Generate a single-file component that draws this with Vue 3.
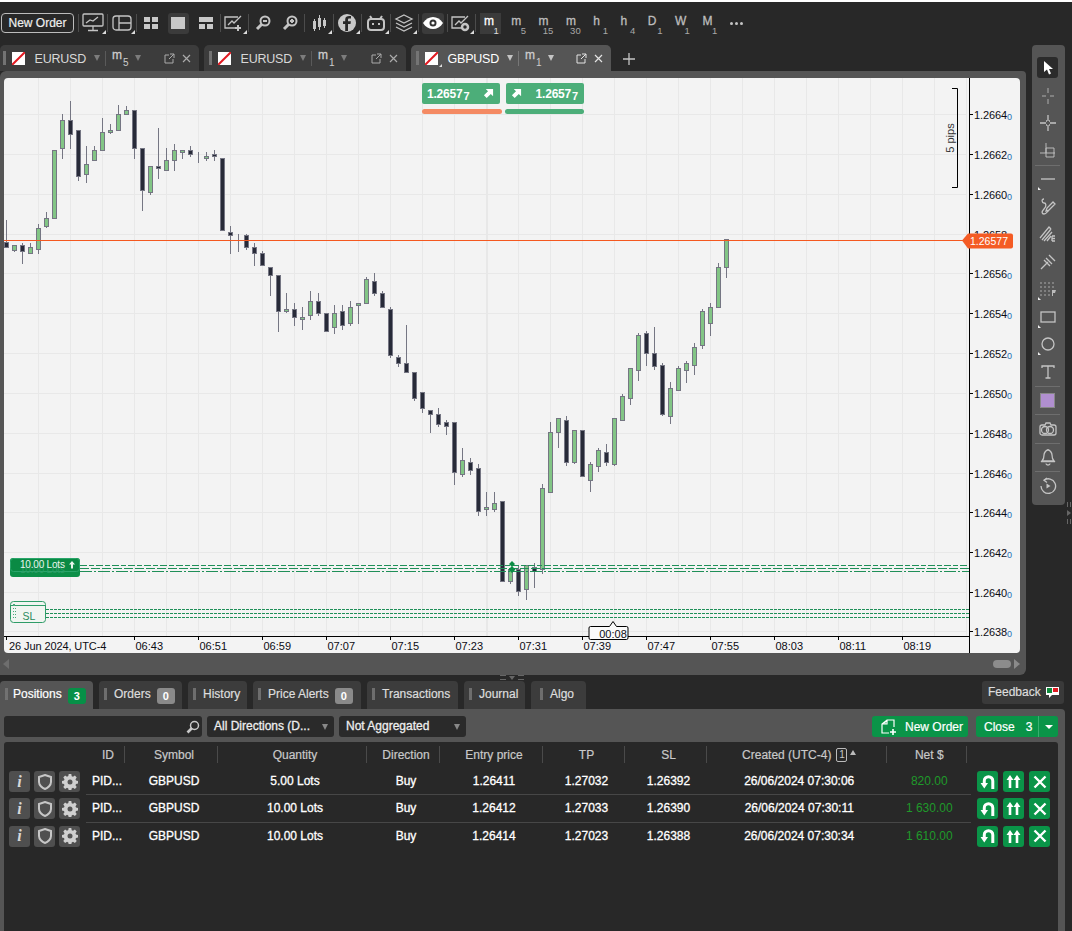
<template>
  <div class="app">
    <!-- top toolbar -->
    <div class="toolbar">
      <button class="new-order">New Order</button>
      <span class="sep"></span>
      <div class="tool wide menu">
        <svg width="24" height="22" viewBox="0 0 24 22" class="ic"><rect x="2" y="2" width="20" height="12" rx="1"/><path d="M5 11l4-3 3 1 5-4"/><path d="M12 14v4M7 18.5h10" /></svg>
      </div>
      <span class="sep"></span>
      <div class="tool wide menu">
        <svg width="22" height="20" viewBox="0 0 22 20" class="ic"><rect x="2" y="3" width="18" height="14" rx="3"/><path d="M8 3v14M8 10h12"/></svg>
      </div>
      <span class="sep"></span>
      <div class="tool">
        <svg width="14" height="12" viewBox="0 0 14 12" class="solid"><rect width="6" height="5"/><rect x="8" width="6" height="5"/><rect y="7" width="6" height="5"/><rect x="8" y="7" width="6" height="5"/></svg>
      </div>
      <div class="tool selected">
        <svg width="14" height="12" viewBox="0 0 14 12" class="solid"><rect width="14" height="12"/></svg>
      </div>
      <div class="tool">
        <svg width="14" height="12" viewBox="0 0 14 12" class="solid"><rect width="14" height="5"/><rect y="7" width="6" height="5"/><rect x="8" y="7" width="6" height="5"/></svg>
      </div>
      <span class="sep"></span>
      <div class="tool menu">
        <svg width="22" height="20" viewBox="0 0 22 20" class="ic"><path d="M13 15H2V4h13"/><path d="M5 12l4-4 2 2 7-7"/><path d="M15 12v6M12 15h6" stroke-width="2"/></svg>
      </div>
      <span class="sep"></span>
      <div class="tool tool-s">
        <svg width="16" height="16" viewBox="0 0 16 16" class="ic thick"><circle cx="10" cy="6" r="4.5"/><path d="M7 9l-5 5" stroke-width="3"/><path d="M8 6h4"/></svg>
      </div>
      <div class="tool tool-s">
        <svg width="16" height="16" viewBox="0 0 16 16" class="ic thick"><circle cx="10" cy="6" r="4.5"/><path d="M7 9l-5 5" stroke-width="3"/><path d="M8 6h4M10 4v4"/></svg>
      </div>
      <span class="sep"></span>
      <div class="tool menu">
        <svg width="16" height="20" viewBox="0 0 16 20" class="solid"><path d="M2 8h1v-2h1v2h1v8h-1v2h-1v-2h-1zM7 5h1v-3h1v3h1v9h-1v3h-1v-3h-1zM12 7h1v-2h1v2h1v6h-1v2h-1v-2h-1z"/></svg>
      </div>
      <span class="sep"></span>
      <div class="tool menu">
        <svg width="20" height="20" viewBox="0 0 20 20"><circle cx="10" cy="10" r="9" fill="#c8c8c8"/><path d="M11 18v-7h2.5l.4-2.800H11V6.800c0-.8.3-1.300 1.400-1.300H14V3.100c-2.800-.4-5.800-.1-5.800 3.300v1.800H6V11h2.200v7z" fill="#282828"/></svg>
      </div>
      <span class="sep"></span>
      <div class="tool menu">
        <svg width="20" height="20" viewBox="0 0 20 20" class="ic thick"><path d="M4 3l2 3M16 3l-2 3"/><rect x="2" y="6" width="16" height="11" rx="3"/><path d="M6 11h2M12 11h2" stroke-width="2"/></svg>
      </div>
      <span class="sep"></span>
      <div class="tool menu">
        <svg width="20" height="20" viewBox="0 0 20 20" class="ic"><path d="M10 2l8 4-8 4-8-4zM2 10l8 4 8-4M2 14l8 4 8-4"/></svg>
      </div>
      <span class="sep"></span>
      <div class="tool selected">
        <svg width="20" height="12" viewBox="0 0 20 12"><path d="M0 6c5-8 15-8 20 0-5 8-15 8-20 0z" fill="#fff"/><circle cx="10" cy="6" r="3.5" fill="#333"/><circle cx="10" cy="6" r="1.600" fill="#fff"/></svg>
      </div>
      <span class="sep"></span>
      <div class="tool menu">
        <svg width="22" height="20" viewBox="0 0 22 20" class="ic"><path d="M11 15H2V4h13"/><path d="M5 12l4-4 2 2 7-7"/><circle cx="15" cy="14" r="3" stroke-width="2.5"/></svg>
      </div>
      <span class="sep"></span>
      <div class="timeframes">
        <div v-for="(tf, i) in timeframes" :key="i" class="tf" :class="{ active: i === 0 }">{{ tf[0] }}<sub>{{ tf[1] }}</sub></div>
        <div class="more"><i></i><i></i><i></i></div>
      </div>
    </div>

    <div class="workspace">
      <div class="main-col">
        <!-- chart tabs -->
        <div class="tabs">
          <div v-for="t in tabs" :key="t.id" class="tab" :class="[t.id, { active: t.active }]">
            <span class="grip"></span>
            <span class="flag" :class="{ menu: t.active }"><svg width="13" height="13" viewBox="0 0 13 13"><rect width="13" height="13" fill="#fff"/><path d="M0 13L13 0" stroke="#e11a22" stroke-width="2"/></svg></span>
            <span class="sym">{{ t.symbol }}</span>
            <span class="caret"></span>
            <span class="tab-sep"></span>
            <span class="tab-tf">m<sub>{{ t.tf }}</sub></span>
            <span class="caret"></span>
            <svg class="pop" width="11" height="11" viewBox="0 0 11 11"><path d="M5 2H1v8h8V6M6 1h4v4M10 1L5 6" fill="none" stroke="currentColor"/></svg>
            <svg class="close" width="9" height="9" viewBox="0 0 9 9"><path d="M1 1l7 7M8 1l-7 7" stroke="currentColor" stroke-width="1.200"/></svg>
          </div>
          <svg class="plus" width="14" height="14" viewBox="0 0 14 14"><path d="M7 1v12M1 7h12" stroke="#c4c4c4" stroke-width="1.300"/></svg>
        </div>

        <div class="chart-panel">
          <div class="chart">
            <svg class="plot" width="1016" height="575" viewBox="4 78 1016 575">
              <g class="grid">
                <line v-for="x in gridX" :key="x" :x1="x" :x2="x" y1="78" y2="636" />
                <line v-for="y in gridY" :key="y" x1="4" x2="967" :y1="y" :y2="y" />
                <line x1="487.5" x2="487.5" y1="78" y2="636" />
              </g>
              <g v-for="c in candles" :key="c.x">
                <line class="wick" :x1="c.x" :x2="c.x" :y1="c.wt" :y2="c.wb" />
                <rect class="body" :class="c.up ? 'up' : 'down'" :x="c.x - 2" :y="c.bt + 0.5" width="4" :height="Math.max(c.bb - c.bt, 0)" />
              </g>

              <line class="price-line" x1="4" x2="965" y1="240.5" y2="240.5" />

              <!-- position lines -->
              <g class="pos-lines">
                <line x1="80" x2="970" y1="565.5" y2="565.5" stroke-dasharray="7 2 5 2" />
                <line x1="80" x2="970" y1="568.5" y2="568.5" stroke-dasharray="9 2" />
                <line x1="80" x2="970" y1="571.5" y2="571.5" stroke-dasharray="12 2 2 2" />
                <line x1="46" x2="970" y1="609.5" y2="609.5" stroke-dasharray="3 1" />
                <line x1="46" x2="970" y1="613.5" y2="613.5" stroke-dasharray="3 1" />
                <line x1="46" x2="970" y1="617.5" y2="617.5" stroke-dasharray="3 1" />
              </g>
              <path class="marker" d="M512 561l3 3-3 3-3-3zM512 566l3.5 3.5-3.5 3.5-3.5-3.5z" />

              <g class="axis">
                <line x1="969.5" x2="969.5" y1="78" y2="653" />
                <line x1="4" x2="970" y1="636.5" y2="636.5" />
                <line v-for="y in prices" :key="y.y" x1="970" x2="973" :y1="y.y" :y2="y.y" />
                <line v-for="t in times" :key="t.x" :x1="t.x" :x2="t.x" y1="636" y2="640" />
                <line x1="6.5" x2="6.5" y1="636" y2="640" />
              </g>
              <text v-for="y in prices" :key="'p' + y.y" class="label price" x="974" :y="y.y + 4">{{ y.text }}<tspan class="tail" dy="1.5">0</tspan></text>
              <text class="label date" x="9" y="650">26 Jun 2024, UTC-4</text>
              <text v-for="t in times" :key="'t' + t.x" class="label" :x="t.x + 1" y="650">{{ t.text }}</text>

              <!-- 5 pips ruler -->
              <path class="ruler" d="M952 88.5h5.5v99H952" />
              <text class="pips" transform="translate(954 138) rotate(-90)" text-anchor="middle">5 pips</text>

              <!-- current price tag -->
              <path class="tag" d="M962 240.5l6-7h43a2 2 0 0 1 2 2v11a2 2 0 0 1-2 2h-43z" />
              <text class="tag-text" x="989" y="244.5" text-anchor="middle">1.26577</text>

              <!-- lots tag -->
              <rect class="lots" x="10" y="558" width="70" height="19" rx="3" />
              <rect class="lots-top" x="10.5" y="558.5" width="69" height="13" rx="3" />
              <text class="lots-shadow" x="20" y="573">10.00 Lots</text>
              <text class="lots-text" x="20" y="568">10.00 Lots</text>
              <path class="lots-arrow" d="M72 561l3 3.5h-2v4h-2v-4h-2z" />

              <!-- SL tag -->
              <rect class="sl" x="10.5" y="601.5" width="35" height="21" rx="3" />
              <line class="sl-line" x1="11" x2="45" y1="605.5" y2="605.5" />
              <path class="sl-grip" d="M13 604h2v2h-2zM13 608h1v1h-1zM15 608h1v1h-1zM13 611h1v1h-1zM15 611h1v1h-1zM13 614h1v1h-1zM15 614h1v1h-1zM13 617h1v1h-1zM15 617h1v1h-1z" />
              <text class="sl-text" x="29" y="620" text-anchor="middle">SL</text>

              <!-- candle timer -->
              <path class="timer" d="M590.5 626.5h19l3.5-5 3.5 5h10a1.5 1.5 0 0 1 1.5 1.5v10a1.5 1.5 0 0 1-1.5 1.5h-36a1.5 1.5 0 0 1-1.5-1.5v-10a1.5 1.5 0 0 1 1.5-1.5z" />
              <text class="label" x="613" y="637.5" text-anchor="middle">00:08</text>
            </svg>

            <!-- quick trade -->
            <div class="quick">
              <div class="quick-col">
                <div class="quick-btn">
                  <span>1.2657<small>7</small></span>
                  <svg width="11" height="11" viewBox="0 0 12 12"><path d="M3 1h8v8L8.5 6.5 4 11 1 8l4.5-4.5z" fill="#fff"/></svg>
                </div>
                <div class="quick-bar sell"></div>
              </div>
              <div class="quick-col">
                <div class="quick-btn">
                  <svg width="11" height="11" viewBox="0 0 12 12"><path d="M3 1h8v8L8.5 6.5 4 11 1 8l4.5-4.5z" fill="#fff"/></svg>
                  <span>1.2657<small>7</small></span>
                </div>
                <div class="quick-bar buy"></div>
              </div>
            </div>
          </div>
          <div class="scroll">
            <span class="arrow-l"></span>
            <span class="thumb"></span>
            <span class="arrow-r"></span>
          </div>
        </div>
      </div>

      <!-- drawing tools -->
      <div class="side-wrap">
        <div class="side">
          <div class="side-grip"></div>
          <div class="side-item current">
            <svg width="14" height="16" viewBox="0 0 14 16"><path d="M3 1v11l3-2.5 2 5 2-1-2-4.5h4z" fill="#fff"/></svg>
          </div>
          <div class="side-item"><svg width="18" height="18" viewBox="0 0 18 18" class="ic"><path d="M9 1v5M9 12v5M3 9h4M11 9h4" stroke-width=".8"/></svg></div>
          <div class="side-item"><svg width="18" height="18" viewBox="0 0 18 18" class="ic"><path d="M9 1v6M9 11v6M1 9h6M11 9h6M7 7h1M10 7h1M7 11h1M10 11h1"/></svg></div>
          <div class="side-item"><svg width="18" height="18" viewBox="0 0 18 18" class="ic"><path d="M7 1v10H1M7 11h9M7 6h8v9H7z" stroke-width=".9"/></svg></div>
          <div class="side-sep first"></div>
          <div class="side-item menu"><svg width="18" height="6" viewBox="0 0 18 6" class="ic"><path d="M2 3h14"/></svg></div>
          <div class="side-item"><svg width="18" height="18" viewBox="0 0 18 18" class="ic"><path d="M5 1c-3 0-2 4 0 4s3 3 0 6-2 5 0 5 3-2 5-4l6-6-2-2-6 6-1 3 3-1"/></svg></div>
          <div class="side-item"><svg width="18" height="18" viewBox="0 0 18 18" class="ic"><path d="M1 13L10 2l2 2M3 15l9-11M5 16l8-9M8 16l4-5"/><path d="M13 11h3M13 13.5h3M13 16h3M13 11v5"/></svg></div>
          <div class="side-item"><svg width="18" height="18" viewBox="0 0 18 18" class="ic"><path d="M2 16l7-7M7 5l6 6M10 2l6 6M5 7l6 6"/></svg></div>
          <div class="side-item menu"><svg width="18" height="14" viewBox="0 0 18 14" class="dots"><path d="M1 1h16M1 5h16M1 9h10M1 13h10"/><path d="M13 8h4l-1 3h-2v3h-1z" class="dots-fill"/></svg></div>
          <div class="side-item menu"><svg width="16" height="12" viewBox="0 0 16 12" class="ic"><rect x="1" y="1" width="14" height="10"/></svg></div>
          <div class="side-item menu"><svg width="14" height="14" viewBox="0 0 14 14" class="ic"><circle cx="7" cy="7" r="6"/></svg></div>
          <div class="side-item"><svg width="14" height="14" viewBox="0 0 14 14" class="ic"><path d="M1 3V1h12v2M7 1v12M4.5 13h5"/></svg></div>
          <div class="side-sep"></div>
          <div class="side-item"><span class="swatch"></span></div>
          <div class="side-sep"></div>
          <div class="side-item"><svg width="18" height="14" viewBox="0 0 18 14" class="ic"><path d="M6 3l1-2h4l1 2h3a2 2 0 0 1 2 2v6a2 2 0 0 1-2 2H3a2 2 0 0 1-2-2V5a2 2 0 0 1 2-2z"/><circle cx="11" cy="8" r="3.5"/><circle cx="6" cy="8" r="3.5"/></svg></div>
          <div class="side-sep"></div>
          <div class="side-item"><svg width="16" height="18" viewBox="0 0 16 18" class="ic"><path d="M8 1v1M2 13c2-2 2-4 2-6s2-5 4-5 4 3 4 5 0 4 2 6zM1 13.5h14M6 15.5c0 2 4 2 4 0"/></svg></div>
          <div class="side-sep"></div>
          <div class="side-item"><svg width="18" height="18" viewBox="0 0 18 18" class="ic"><path d="M5 3.200A7.300 7.300 0 1 1 2 9"/><path d="M8 1L5 3.200 8 5.500"/><path d="M7.500 6.500v5l4-2.500z" class="fill-ic"/></svg></div>
        </div>
        <div class="side-handle"><i></i><b></b><i></i></div>
      </div>
    </div>

    <!-- bottom panel -->
    <div class="bottom">
      <div class="resize"><i></i><b></b><i></i></div>
      <div class="btabs">
        <div v-for="b in bottomTabs" :key="b.name" class="btab" :class="{ active: b.active }" :style="{ width: b.w + 'px' }">
          <span class="grip small"></span>
          <span class="btab-name">{{ b.name }}</span>
          <span v-if="b.count !== undefined" class="count" :class="{ on: b.active }">{{ b.count }}</span>
        </div>
        <div class="feedback">
          Feedback
          <svg width="15" height="13" viewBox="0 0 15 13"><path d="M1 1h13v8H7l-3 3V9H1z" fill="#fff"/><rect x="2" y="2" width="5" height="5" fill="#108a3c"/><rect x="8" y="2" width="5" height="4" fill="#e01b22"/></svg>
        </div>
      </div>
      <div class="bpanel">
        <div class="filters">
          <div class="search">
            <svg width="14" height="14" viewBox="0 0 14 14" class="search-ic"><circle cx="8.5" cy="5.5" r="4"/><path d="M6 8l-4.500 4.500" stroke-width="2.6"/></svg>
          </div>
          <div class="select s1">All Directions (D...<span class="s-caret"></span></div>
          <div class="select s2">Not Aggregated<span class="s-caret"></span></div>
          <button class="g-btn order">
            <svg width="17" height="18" viewBox="0 0 17 18" class="btn-ic"><path d="M9 15H2V6l5-4h7v7M5 6V4M7 2v4H2"/><path d="M13 11v6M10 14h6" stroke-width="1.6"/></svg>
            New Order
          </button>
          <div class="g-btn closer">
            <span class="close-label">Close</span><span class="close-n">3</span>
            <span class="close-drop"><i></i></span>
          </div>
        </div>

        <div class="table">
          <div class="thead">
            <div class="thead-gap"></div>
            <div class="cols">
              <div v-for="h in headers" :key="h" class="th">
                <span>{{ h }}</span>
                <template v-if="h === 'Created (UTC-4)'">
                  <span class="sort-n">1</span><span class="sort-up"></span>
                </template>
              </div>
            </div>
          </div>

          <div v-for="(r, i) in rows" :key="i" class="row">
            <div class="acts">
              <span class="act"><em>i</em></span>
              <span class="act"><svg width="14" height="16" viewBox="0 0 14 16"><path d="M7 1l6 2v5c0 3-3 6-6 7-3-1-6-4-6-7V3z" fill="none" stroke="#c6c6c6" stroke-width="2"/></svg></span>
              <span class="act"><svg width="16" height="16" viewBox="0 0 16 16"><path d="M6.7 0h2.600l.4 2.200 1.300.6 1.900-1.200 1.800 1.900-1.200 1.800.5 1.300 2 .4v2.600l-2 .4-.5 1.300 1.200 1.800-1.800 1.900-1.900-1.200-1.300.6-.4 2.200H6.700l-.4-2.200-1.300-.6-1.900 1.200-1.800-1.900 1.200-1.800-.5-1.300-2-.4V6.900l2-.4.5-1.300-1.200-1.800 1.800-1.900 1.900 1.200 1.300-.6z" fill="#d0d0d0"/><circle cx="8" cy="8" r="2.5" fill="#555"/></svg></span>
            </div>
            <div class="cols body-cols" :class="{ last: i === rows.length - 1 }">
              <div class="td pid">PID...</div>
              <div class="td">GBPUSD</div>
              <div class="td">{{ r.qty }}</div>
              <div class="td">Buy</div>
              <div class="td">{{ r.entry }}</div>
              <div class="td">{{ r.tp }}</div>
              <div class="td">{{ r.sl }}</div>
              <div class="td">{{ r.created }}</div>
              <div class="td net">{{ r.net }}</div>
            </div>
            <div class="row-btns">
              <span class="gbtn"><svg width="16" height="16" viewBox="0 0 15 15"><path d="M12 14V6.500a4 4 0 0 0-8 0V9" fill="none" stroke="#fff" stroke-width="2.8"/><path d="M.5 8.500h7L4 13.500z" fill="#fff"/></svg></span>
              <span class="gbtn"><svg width="15" height="15" viewBox="0 0 15 15"><path d="M4 1l3.500 5H5.300v8H2.700V6H.5zM11 1l3.500 5h-2.200v8H9.700V6H7.500z" fill="#fff"/></svg></span>
              <span class="gbtn"><svg width="14" height="14" viewBox="0 0 14 14"><path d="M1.500 1.500l11 11M12.500 1.500l-11 11" stroke="#fff" stroke-width="2.400"/></svg></span>
            </div>
          </div>
        </div>
      </div>
    </div>
  </div>
</template>

<script setup>
const timeframes = [
  ["m", 1], ["m", 5], ["m", 15], ["m", 30], ["h", 1], ["h", 4], ["D", 1], ["W", 1], ["M", 1],
]

const tabs = [
  { id: "t1", symbol: "EURUSD", tf: 5 },
  { id: "t2", symbol: "EURUSD", tf: 1 },
  { id: "t3", symbol: "GBPUSD", tf: 1, active: true },
]

const bottomTabs = [
  { name: "Positions", w: 93, count: 3, active: true },
  { name: "Orders", w: 83, count: 0 },
  { name: "History", w: 59 },
  { name: "Price Alerts", w: 108, count: 0 },
  { name: "Transactions", w: 91 },
  { name: "Journal", w: 61 },
  { name: "Algo", w: 55 },
]

const headers = ["ID", "Symbol", "Quantity", "Direction", "Entry price", "TP", "SL", "Created (UTC-4)", "Net $"]

const rows = [
  { qty: "5.00 Lots", entry: "1.26411", tp: "1.27032", sl: "1.26392", created: "26/06/2024 07:30:06", net: "820.00" },
  { qty: "10.00 Lots", entry: "1.26412", tp: "1.27033", sl: "1.26390", created: "26/06/2024 07:30:11", net: "1 630.00" },
  { qty: "10.00 Lots", entry: "1.26414", tp: "1.27023", sl: "1.26388", created: "26/06/2024 07:30:34", net: "1 610.00" },
]

// grid and axis in page pixels, the svg viewBox starts at the chart's corner
const gridX = Array.from({ length: 30 }, (_, i) => 38.5 + 32 * i)
const gridY = [114.5, 154.5, 194.5, 234.5, 273.5, 313.5, 353.5, 393.5, 433.5, 473.5, 512.5, 552.5, 592.5, 631.5]

const priceText = ["1.2664", "1.2662", "1.2660", "1.2658", "1.2656", "1.2654", "1.2652", "1.2650", "1.2648", "1.2646", "1.2644", "1.2642", "1.2640", "1.2638"]
const prices = priceText.map((text, i) => ({ text, y: gridY[i] }))

const timeText = ["06:43", "06:51", "06:59", "07:07", "07:15", "07:23", "07:31", "07:39", "07:47", "07:55", "08:03", "08:11", "08:19"]
const times = timeText.map((text, i) => ({ text, x: 134.5 + 64 * i }))

// wick top, body top, body bottom, wick bottom, 1 = green
const raw = [
  [220, 242, 247, 247, 0], [245, 245, 250, 252, 1], [243, 245, 251, 264, 0], [243, 247, 253, 253, 1],
  [224, 228, 249, 254, 1], [212, 218, 226, 228, 1], [150, 150, 218, 218, 1], [114, 120, 148, 159, 1],
  [101, 120, 134, 149, 0], [130, 130, 176, 181, 0], [146, 164, 174, 183, 1], [146, 150, 160, 160, 1],
  [118, 132, 150, 150, 1], [124, 130, 132, 134, 1], [105, 114, 130, 130, 1], [106, 110, 114, 114, 1],
  [110, 110, 148, 159, 0], [148, 148, 190, 211, 0], [166, 166, 192, 195, 1], [128, 166, 168, 179, 0],
  [148, 160, 170, 170, 1], [144, 150, 160, 171, 1], [150, 150, 152, 159, 1], [146, 150, 154, 157, 0],
  [152, 158, 158, 163, 1], [152, 156, 158, 161, 1], [150, 154, 156, 161, 0], [158, 158, 230, 230, 0],
  [226, 232, 235, 254, 0], [234, 237, 237, 252, 1], [234, 235, 247, 250, 0], [243, 247, 253, 266, 0],
  [251, 253, 265, 265, 0], [267, 267, 275, 296, 0], [275, 275, 311, 332, 0], [293, 309, 311, 313, 1],
  [303, 309, 317, 326, 0], [307, 317, 319, 330, 1], [291, 301, 315, 320, 1], [293, 301, 313, 316, 0],
  [313, 313, 331, 331, 0], [305, 313, 327, 334, 1], [305, 311, 325, 330, 0], [301, 307, 323, 326, 1],
  [303, 303, 305, 324, 1], [277, 279, 303, 303, 1], [273, 281, 293, 296, 0], [291, 293, 307, 307, 0],
  [307, 309, 355, 358, 0], [355, 357, 363, 367, 0], [325, 363, 372, 372, 0], [372, 372, 398, 401, 0],
  [392, 392, 408, 413, 0], [410, 410, 414, 433, 0], [408, 414, 424, 427, 0], [420, 422, 426, 435, 0],
  [422, 422, 472, 485, 0], [448, 460, 474, 477, 1], [458, 462, 470, 475, 0], [464, 468, 511, 516, 0],
  [492, 507, 509, 516, 1], [492, 503, 509, 512, 1], [501, 501, 581, 581, 0], [569, 569, 581, 584, 1],
  [565, 569, 591, 596, 0], [565, 565, 589, 600, 1], [563, 567, 571, 588, 0], [484, 488, 569, 574, 1],
  [422, 432, 492, 492, 1], [418, 418, 432, 448, 1], [416, 420, 462, 466, 0], [430, 430, 462, 464, 1],
  [430, 430, 476, 476, 0], [462, 464, 480, 492, 1], [448, 450, 466, 472, 1], [444, 452, 462, 466, 0],
  [418, 418, 464, 466, 1], [394, 396, 420, 420, 1], [368, 368, 398, 405, 1], [333, 335, 370, 381, 1],
  [331, 333, 353, 366, 0], [327, 353, 366, 370, 0], [363, 365, 414, 416, 0], [382, 388, 416, 424, 1],
  [366, 368, 390, 390, 1], [361, 363, 370, 383, 1], [343, 347, 365, 375, 1], [309, 311, 345, 349, 1],
  [303, 307, 323, 336, 1], [263, 267, 307, 307, 1], [239, 239, 267, 278, 1],
]
const candles = raw.map((c, i) => ({
  x: 6.5 + 8 * i, wt: c[0], bt: c[1], bb: c[2], wb: c[3], up: c[4] === 1,
}))
</script>

<style scoped>
.app {
  width: 1072px;
  height: 931px;
  box-sizing: border-box;
  border-top: 2px solid #fff;
  background: #282828;
  overflow: hidden;
  display: flex;
  flex-direction: column;
  font-family: "Liberation Sans", Arial, sans-serif;
  font-size: 12px;
  color: #eee;
}

.ic { fill: none; stroke: #c4c4c4; stroke-width: 1.3; }
.ic.thick { stroke-width: 2; }
.solid { fill: #c8c8c8; }
.fill-ic { fill: #c4c4c4; stroke: none; }

/* toolbar */
.toolbar {
  height: 42px;
  display: flex;
  align-items: center;
  padding-left: 1px;
  background: #282828;
}
.new-order {
  width: 73px;
  height: 20px;
  margin-right: 4px;
  padding: 0;
  box-sizing: border-box;
  border: 1px solid #bcbcbc;
  border-radius: 4px;
  background: #282828;
  color: #eee;
  font: 12px "Liberation Sans", Arial, sans-serif;
  -webkit-text-stroke: .2px;
}
.sep {
  width: 1px;
  height: 18px;
  background: #4c4c4c;
}
.tool {
  position: relative;
  width: 27.5px;
  height: 21px;
  display: flex;
  align-items: center;
  justify-content: center;
}
.tool.wide { width: 28px; }
.tool.selected::before {
  content: "";
  position: absolute;
  inset: 0 3px;
  border-radius: 3px;
  background: #3b3b3b;
}
.tool > svg { position: relative; }
.menu::after {
  content: "";
  position: absolute;
  right: 1px;
  bottom: 0;
  border-style: solid;
  border-width: 0 0 4px 4px;
  border-color: transparent transparent #ddd transparent;
}
.timeframes {
  display: flex;
  align-items: center;
  margin-left: 1px;
}
.tf {
  position: relative;
  width: 27.3px;
  height: 21px;
  box-sizing: border-box;
  padding: 0 0 0 7px;
  font-size: 12px;
  line-height: 17px;
  -webkit-text-stroke: .3px;
  color: #bdbdbd;
  border-radius: 3px;
}
.tf.active {
  color: #fff;
  background: linear-gradient(#3b3b3b, #3b3b3b) 3px 0 / 21px 21px no-repeat;
}
.tf sub {
  position: absolute;
  right: 5.5px;
  top: 13px;
  font-size: 9.5px;
  line-height: 9px;
  -webkit-text-stroke: 0;
  color: #a8a8a8;
}
.tf.active sub { color: #ddd; }
.more {
  display: flex;
  gap: 2px;
  margin-left: 7px;
}
.more i {
  width: 3px;
  height: 3px;
  border-radius: 50%;
  background: #c4c4c4;
}

/* workspace */
.workspace { display: flex; height: 631px; flex: none; }
.main-col { width: 1026px; flex: none; }
.tabs {
  height: 27px;
  display: flex;
  align-items: flex-end;
  gap: 5px;
}
.tab {
  position: relative;
  height: 26px;
  box-sizing: border-box;
  display: flex;
  align-items: center;
  background: #3c3c3c;
  border-radius: 5px 5px 0 0;
  color: #aaa;
  padding-left: 5px;
}
.t1 { width: 199px; padding-left: 3px; }
.t2 { width: 202px; }
.t3 { width: 200px; }
.tab.active { background: #555; color: #e4e4e4; }
.grip {
  width: 3px;
  height: 14px;
  margin-right: 6px;
  flex: none;
  background: radial-gradient(circle, #777 .7px, transparent .8px) 0 0 / 2px 2px;
}
.grip.small { margin-right: 0; height: 12px; opacity: .9; }
.flag { position: relative; width: 13px; height: 13px; margin-right: 9.5px; }
.flag svg { display: block; }
.flag.menu::after { right: -4px; bottom: -2px; border-width: 0 0 3px 3px; }
.sym { width: 50.5px; padding-top: 2px; font-size: 12.5px; letter-spacing: -.2px; color: #d8d8d8; }
.tab.active .sym { color: #fff; }
.caret {
  width: 0;
  height: 0;
  margin-left: 9px;
  border-style: solid;
  border-width: 6px 3.5px 0;
  border-color: #7c7c7c transparent transparent;
}
.tab.active .caret { border-top-color: #c4c4c4; }
.tab-sep {
  width: 1px;
  height: 15px;
  margin: 0 6px 0 5px;
  background: #5a5a5a;
}
.tab.active .tab-sep { background: #777; }
.tab-tf {
  width: 14px;
  margin-top: -5px;
  color: #ccc;
  -webkit-text-stroke: .3px;
}
.tab-tf sub {
  font-size: 10px;
  vertical-align: -7px;
  line-height: 0;
  margin-left: 1px;
  -webkit-text-stroke: 0;
}
.pop { position: absolute; right: 24px; top: 8px; }
.close { position: absolute; right: 8px; top: 9px; }
.plus { margin: 0 0 5px 6px; }

.chart-panel {
  height: 604px;
  box-sizing: border-box;
  padding: 7px 6px 0 4px;
  background: #555;
  border-radius: 6px 4px 6px 0;
}
.chart {
  position: relative;
  width: 1016px;
  height: 575px;
  background: #f3f3f3;
  border-radius: 4px;
  overflow: hidden;
}
.plot { display: block; }
.grid line { stroke: #e8e8e8; stroke-width: 1; }
.wick { stroke: #757683; stroke-width: 1; }
.body { stroke: #757683; stroke-width: 1; }
.body.up { fill: #82c585; }
.body.down { fill: #272a38; }
.price-line { stroke: #f4581f; stroke-width: 1; }
.pos-lines line { stroke: #1f8f58; stroke-width: 1; }
.marker { fill: #0b8c45; }
.axis line { stroke: #000; stroke-width: 1; }
.label { font-size: 11px; fill: #0c0c14; }
.label.price { letter-spacing: -.1px; }
.label.date { letter-spacing: -.1px; }
.tail { font-size: 9px; fill: #1f6fb5; }
.ruler { fill: none; stroke: #000; stroke-width: 1; }
.pips { font-size: 11px; fill: #333; }
.tag { fill: #f45b24; }
.tag-text { font-size: 10.5px; fill: #fff; }
.lots { fill: #0c8f48; }
.lots-top { fill: #0a8a44; stroke: #2aa56a; stroke-width: 1; }
.lots-text { font-size: 10px; letter-spacing: -.2px; fill: #e8f5ec; }
.lots-shadow { font-size: 10px; letter-spacing: -.2px; fill: #2b9c64; }
.lots-arrow { fill: #e8f5ec; }
.sl { fill: #f1f5f1; stroke: #2f9c68; stroke-width: 1; }
.sl-line { stroke: #2f9c68; stroke-width: 1; }
.sl-grip { fill: #4aa87c; }
.sl-text { font-size: 10.5px; fill: #2b8a5c; }
.timer { fill: #fafafa; stroke: #000; stroke-width: 1; }

.quick {
  position: absolute;
  left: 418px;
  top: 5px;
  display: flex;
  gap: 6px;
}
.quick-col { width: 78px; }
.quick-btn {
  height: 21px;
  padding: 0 6px 0 5px;
  display: flex;
  align-items: center;
  justify-content: space-between;
  background: #4cae79;
  border-radius: 2px;
  color: #fff;
  font-size: 12px;
  letter-spacing: -.2px;
  font-weight: 700;
}
.quick-btn small { font-size: 11px; vertical-align: -2px; line-height: 0; margin-left: 1px; }
.quick-bar { height: 5px; margin-top: 5px; border-radius: 3px; }
.quick-bar.sell { width: 80px; background: #f48a63; }
.quick-bar.buy { width: 79px; margin-left: -1px; background: #4cae79; }

.scroll {
  position: relative;
  height: 22px;
}
.arrow-l, .arrow-r {
  position: absolute;
  top: 6px;
  width: 0;
  height: 0;
  border-style: solid;
  border-width: 5px 6px 5px 0;
  border-color: transparent #6e6e6e transparent transparent;
}
.arrow-l { left: -1px; }
.arrow-r {
  right: 0;
  border-width: 5px 0 5px 6px;
  border-color: transparent transparent transparent #8a8a8a;
}
.thumb {
  position: absolute;
  left: 989px;
  top: 7px;
  width: 18px;
  height: 8px;
  border-radius: 4px;
  background: #8c8c8c;
}

/* right tools */
.side-wrap { position: relative; flex: 1; padding: 1px 0 0 6px; }
.side {
  width: 33px;
  height: 460px;
  box-sizing: border-box;
  display: flex;
  flex-direction: column;
  align-items: flex-start;
  background: #555;
  border-radius: 4px;
  padding-top: 5px;
}
.side-grip {
  width: 22px;
  height: 4px;
  margin: 0 0 3px 5px;
  background: radial-gradient(circle, #888 .6px, transparent .7px) 0 0 / 2px 2px;
}
.side-item {
  position: relative;
  width: 31px;
  height: 27.5px;
  flex: none;
  display: flex;
  align-items: center;
  justify-content: center;
}
.side-item.current::before {
  content: "";
  position: absolute;
  left: 5px;
  top: 0;
  width: 21px;
  height: 21px;
  border-radius: 3px;
  background: #2b2b2b;
}
.side-item.current { height: 21px; margin-bottom: 4px; }
.side-item.current svg { position: relative; }
.side-item.menu::after { left: 6px; right: auto; bottom: 3px; border-width: 3px 0 0 3px; border-color: transparent transparent transparent #eee; }
.side-sep {
  width: 25px;
  height: 1px;
  margin-left: 3px;
  flex: none;
  background: #6e6e6e;
}
.dots { fill: none; stroke: #aaa; stroke-width: 1; stroke-dasharray: 2 2; }
.dots-fill { fill: #bbb; stroke: none; }
.swatch {
  width: 13px;
  height: 13px;
  background: #b08fcf;
  border: 1px solid #888;
}
.side-handle {
  position: absolute;
  left: 41px;
  top: 458px;
  display: flex;
  flex-direction: column;
  gap: 3px;
  width: 4px;
}
.side-handle i { height: 5px; border-left: 1px solid #666; border-right: 1px solid #666; }
.side-handle b {
  width: 0;
  height: 0;
  border-style: solid;
  border-width: 3px 0 3px 4px;
  border-color: transparent transparent transparent #666;
}

/* bottom */
.bottom { position: relative; flex: 1; padding-top: 6px; }
.resize {
  position: absolute;
  top: 0;
  left: 500px;
  display: flex;
  align-items: center;
  gap: 3px;
}
.resize i { width: 6px; height: 3px; border-top: 1px solid #666; border-bottom: 1px solid #666; }
.resize b {
  width: 0;
  height: 0;
  border-style: solid;
  border-width: 4px 3px 0;
  border-color: #666 transparent transparent;
}
.btabs {
  position: relative;
  height: 28px;
  display: flex;
  gap: 6px;
}
.btab {
  height: 28px;
  box-sizing: border-box;
  padding: 6px 0 0 5px;
  display: flex;
  background: #3c3c3c;
  border-radius: 4px 4px 0 0;
  color: #ddd;
  -webkit-text-stroke: .2px;
}
.btab:nth-child(7) { padding-left: 9px; }
.btab.active { background: #555; color: #fff; }
.btab .grip { margin-top: 1px; }
.btab-name { margin-left: 5px; }
.btab:nth-child(n+2) .btab-name { margin-left: 7px; }
.count {
  width: 18px;
  height: 16px;
  margin: 1px 0 0 6px;
  text-align: center;
  line-height: 17px;
  font-size: 11px;
  font-weight: 700;
  -webkit-text-stroke: 0;
  border-radius: 3px;
  background: #8a8a8a;
  color: #fff;
}
.count.on { background: #069047; }
.feedback {
  position: absolute;
  left: 982px;
  top: 0;
  width: 82px;
  height: 23px;
  box-sizing: border-box;
  padding: 0 0 1px 6px;
  display: flex;
  align-items: center;
  gap: 4px;
  background: #3a3a3a;
  border-radius: 3px;
  color: #ddd;
  -webkit-text-stroke: .2px;
}
.bpanel {
  width: 1065px;
  height: 222px;
  box-sizing: border-box;
  padding: 7px 7px 0 4px;
  background: #555;
  border-radius: 0 4px 0 0;
}
.filters {
  height: 21px;
  display: flex;
  gap: 5px;
}
.search {
  position: relative;
  width: 198px;
  background: #2a2a2a;
  border-radius: 3px;
}
.search-ic {
  position: absolute;
  left: 182px;
  top: 4px;
  fill: none;
  stroke: #c8c8c8;
  stroke-width: 1.5;
}
.select {
  position: relative;
  box-sizing: border-box;
  padding-left: 7px;
  line-height: 20px;
  background: #2a2a2a;
  border-radius: 3px;
  color: #eee;
  -webkit-text-stroke: .3px;
}
.s1 { width: 127px; }
.s2 { width: 127px; }
.s-caret {
  position: absolute;
  right: 6px;
  top: 8px;
  border-style: solid;
  border-width: 6px 3px 0;
  border-color: #888 transparent transparent;
}
.g-btn {
  height: 21px;
  display: flex;
  align-items: center;
  background: #0a9448;
  border-radius: 3px;
  color: #fff;
  font: 12px "Liberation Sans", Arial, sans-serif;
  -webkit-text-stroke: .2px;
}
.order {
  width: 96px;
  margin-left: auto;
  margin-right: 3px;
  padding: 0 0 0 8px;
  gap: 8px;
  border: 0;
  box-sizing: border-box;
}
.btn-ic { fill: none; stroke: #fff; stroke-width: 1.2; flex: none; }
.closer { width: 82px; padding-left: 8px; box-sizing: border-box; }
.close-n { margin-left: 11px; }
.close-drop {
  margin-left: auto;
  width: 19px;
  height: 21px;
  border-left: 1px solid #3aae70;
  display: flex;
  align-items: center;
  justify-content: center;
}
.close-drop i {
  border-style: solid;
  border-width: 4px 4px 0;
  border-color: #fff transparent transparent;
}
.table {
  height: 189px;
  margin-top: 5px;
  background: #282828;
  border-radius: 3px 3px 0 0;
}
.thead {
  height: 26px;
  box-sizing: border-box;
  padding-top: 4px;
  display: flex;
  align-items: flex-start;
}
.thead-gap { width: 82px; flex: none; }
.cols {
  display: grid;
  grid-template-columns: 39px 93px 149px 73px 103px 82px 82px 179.5px 80.5px;
  width: 885px;
  flex: none;
}
.th {
  position: relative;
  height: 17px;
  box-sizing: border-box;
  padding-left: 5px;
  display: flex;
  align-items: center;
  justify-content: center;
  color: #c9c9c9;
  -webkit-text-stroke: .2px;
}
.th::after {
  content: "";
  position: absolute;
  right: 0;
  top: 0;
  width: 1px;
  height: 17px;
  background: #4a4a4a;
}
.sort-n {
  width: 9px;
  height: 12px;
  margin-left: 5px;
  border: 1px solid #bbb;
  border-radius: 2px;
  font-size: 10px;
  line-height: 12px;
  text-align: center;
  -webkit-text-stroke: 0;
}
.sort-up {
  margin: -5px 0 0 3px;
  border-style: solid;
  border-width: 0 3px 5px;
  border-color: transparent transparent #bbb;
}
.row {
  height: 27.3px;
  display: flex;
  align-items: stretch;
}
.acts {
  width: 82px;
  flex: none;
  display: flex;
  gap: 4px;
  padding: 3px 0 0 5px;
  box-sizing: border-box;
}
.act {
  width: 21px;
  height: 21px;
  display: flex;
  align-items: center;
  justify-content: center;
  background: #4f4f4f;
  border-radius: 3px;
}
.act em {
  font: italic 700 16px "Liberation Serif", serif;
  color: #d8d8d8;
}
.body-cols {
  border-bottom: 1px solid #474747;
  box-sizing: border-box;
}
.body-cols.last { border-bottom-color: transparent; }
.td {
  padding-left: 5px;
  text-align: center;
  line-height: 26px;
  color: #fff;
  white-space: nowrap;
  -webkit-text-stroke: .3px;
}
.td.pid { padding-left: 6px; text-align: left; }
.td.net { color: #1f9a2a; -webkit-text-stroke: 0; }
.row-btns {
  display: flex;
  gap: 5px;
  margin-left: 6px;
  padding-top: 3px;
}
.gbtn {
  width: 21px;
  height: 21px;
  display: flex;
  align-items: center;
  justify-content: center;
  background: #0a9448;
  border-radius: 3px;
}
</style>

<style>
html, body { margin: 0; background: #282828; }
button { cursor: default; }
</style>
